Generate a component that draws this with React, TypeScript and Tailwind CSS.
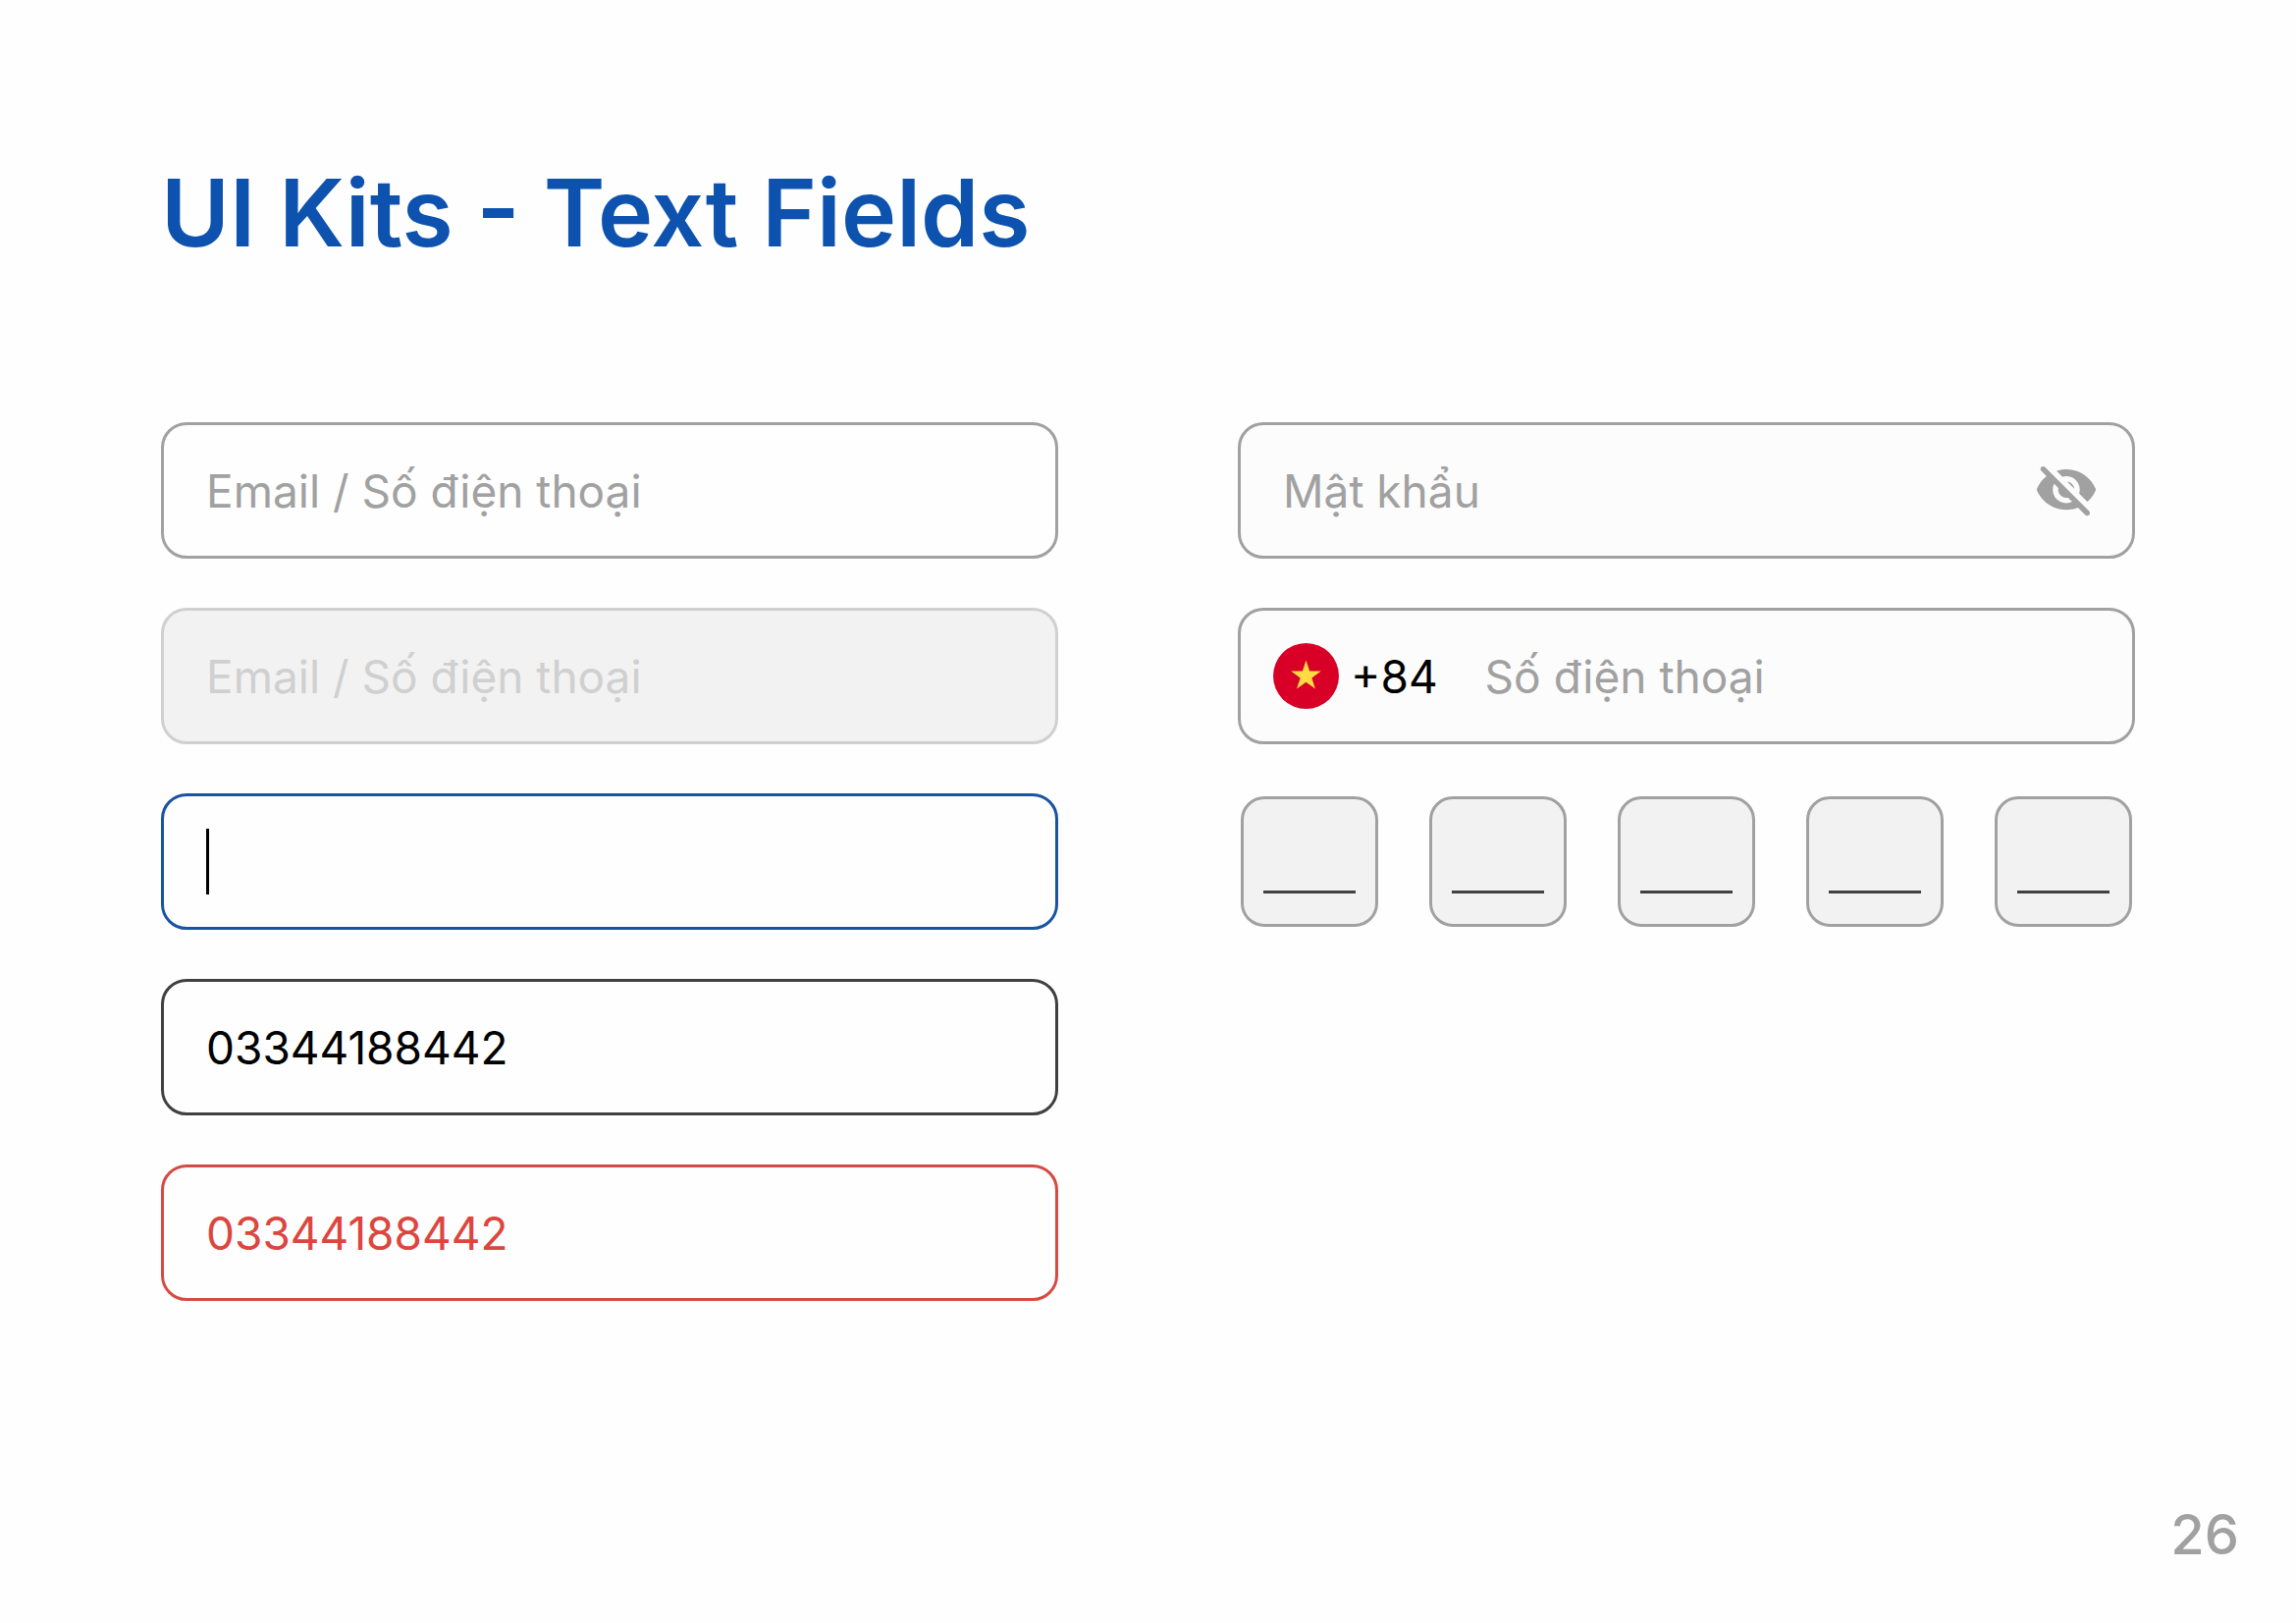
import React, { useState } from "react";
import clsx from "clsx";

type Status = "default" | "disabled" | "focused" | "filled" | "error";

interface TextFieldProps {
  label: string;
  status?: Status;
  placeholder?: string;
  initialValue?: string;
}

const fieldBase = "flex items-center h-[139px] w-full rounded-[26px] border-3";
const inputBase = "min-w-0 flex-1 h-full bg-transparent outline-none";

const boxStyles: Record<Status, string> = {
  default: "border-[#a1a1a1] bg-[#fefefe]",
  disabled: "border-[#d0d0d0] bg-[#f2f2f2]",
  focused: "border-[#1a54a0] bg-[#fefefe]",
  filled: "border-[#404040] bg-[#fefefe]",
  error: "border-[#d64a43] bg-[#fefefe]",
};

const textStyles: Record<Status, string> = {
  default: "text-black placeholder:text-[#a1a1a1]",
  disabled: "text-[#d0d0d0] placeholder:text-[#d0d0d0]",
  focused: "text-black caret-transparent",
  filled: "text-black",
  error: "text-[#dd463e]",
};

function TextField({ label, status = "default", placeholder, initialValue = "" }: TextFieldProps) {
  const [value, setValue] = useState(initialValue);

  return (
    <div className={clsx(fieldBase, "px-[43px]", boxStyles[status])}>
      {status === "focused" && <span className="h-[67px] w-[3px] bg-black" />}
      <input
        type="text"
        aria-label={label}
        aria-invalid={status === "error"}
        disabled={status === "disabled"}
        placeholder={placeholder}
        value={value}
        onChange={(e) => setValue(e.target.value)}
        className={clsx(inputBase, textStyles[status])}
      />
    </div>
  );
}

function EyeOffIcon() {
  return (
    <svg viewBox="0 0 24 24" className="size-[66px]" fill="currentColor" aria-hidden="true">
      <path d="M12 6.5c2.76 0 5 2.24 5 5 0 .51-.1 1-.24 1.46l3.06 3.06c1.39-1.23 2.49-2.77 3.18-4.53C21.27 7.11 17 4 12 4c-1.27 0-2.49.2-3.64.57l2.17 2.17c.47-.14.96-.24 1.47-.24zM2.71 3.16c-.39.39-.39 1.02 0 1.41l1.97 1.97C3.06 7.83 1.77 9.53 1 11.5 2.73 15.89 7 19 12 19c1.52 0 2.97-.3 4.31-.82l2.72 2.72c.39.39 1.02.39 1.41 0 .39-.39.39-1.02 0-1.41L4.13 3.16c-.39-.39-1.03-.39-1.42 0zM12 16.5c-2.76 0-5-2.24-5-5 0-.77.18-1.5.49-2.14l1.57 1.57c-.03.18-.06.37-.06.57 0 1.66 1.34 3 3 3 .2 0 .38-.03.57-.07L14.14 16c-.65.32-1.37.5-2.14.5zm2.97-5.33c-.15-1.4-1.25-2.49-2.64-2.64l2.64 2.64z" />
    </svg>
  );
}

function VietnamFlag() {
  return (
    <svg viewBox="0 0 512 512" className="size-[67px]" aria-hidden="true">
      <circle cx="256" cy="256" r="256" fill="#d80027" />
      <path
        fill="#ffda44"
        d="m256 133.565 27.628 85.029h89.405l-72.331 52.55 27.628 85.03L256 303.623l-72.33 52.551 27.628-85.03-72.33-52.55h89.404z"
      />
    </svg>
  );
}

function PasswordField() {
  const [visible, setVisible] = useState(false);

  return (
    <div className={clsx(fieldBase, "border-[#a1a1a1] bg-[#fcfcfc] pl-[43px] pr-[34px]")}>
      <input
        type={visible ? "text" : "password"}
        aria-label="Mật khẩu"
        placeholder="Mật khẩu"
        className={clsx(inputBase, textStyles.default)}
      />
      <button
        type="button"
        aria-label="Hiện mật khẩu"
        onClick={() => setVisible((prev) => !prev)}
        className="text-[#a1a1a1]"
      >
        <EyeOffIcon />
      </button>
    </div>
  );
}

function PhoneField() {
  return (
    <div className={clsx(fieldBase, "border-[#a1a1a1] bg-[#fcfcfc] pl-[33px] pr-[43px]")}>
      <button type="button" aria-label="Mã quốc gia +84" className="flex items-center gap-3">
        <VietnamFlag />
        <span>+84</span>
      </button>
      <input
        type="tel"
        aria-label="Số điện thoại"
        placeholder="Số điện thoại"
        className={clsx(inputBase, textStyles.default, "ml-12")}
      />
    </div>
  );
}

function OtpField() {
  return (
    <div className="flex justify-between px-[3px] pt-[3px]">
      {[1, 2, 3, 4, 5].map((digit) => (
        <label
          key={digit}
          className="flex h-[133px] w-[140px] flex-col rounded-3xl border-3 border-[#a1a1a1] bg-[#f2f2f2] px-5 pb-[31px] pt-4"
        >
          <input
            type="text"
            inputMode="numeric"
            maxLength={1}
            aria-label={`Số thứ ${digit}`}
            className="min-h-0 w-full flex-1 border-b-3 border-[#404040] bg-transparent text-center outline-none"
          />
        </label>
      ))}
    </div>
  );
}

export default function App() {
  return (
    <main className="flex min-h-screen flex-col bg-[#fefefe] px-[164px] pt-[161px] pb-[54px] font-['Inter',sans-serif] text-[46px] leading-none">
      <h1 className="text-[95px] leading-[112px] font-semibold text-[#0d52ae]">UI Kits - Text Fields</h1>
      <div className="mt-[157px] grid grid-cols-2 gap-x-[183px]">
        <div className="flex flex-col gap-[50px]">
          <TextField label="Email hoặc số điện thoại" placeholder="Email / Số điện thoại" />
          <TextField
            label="Email hoặc số điện thoại (khóa)"
            status="disabled"
            placeholder="Email / Số điện thoại"
          />
          <TextField label="Đang nhập" status="focused" />
          <TextField label="Đã nhập" status="filled" initialValue="03344188442" />
          <TextField label="Lỗi" status="error" initialValue="03344188442" />
        </div>
        <div className="flex flex-col gap-[50px]">
          <PasswordField />
          <PhoneField />
          <OtpField />
        </div>
      </div>
      <p className="-mr-[106px] mt-auto text-right text-[56px] leading-[72px] font-medium text-[#a1a1a1]">26</p>
    </main>
  );
}
